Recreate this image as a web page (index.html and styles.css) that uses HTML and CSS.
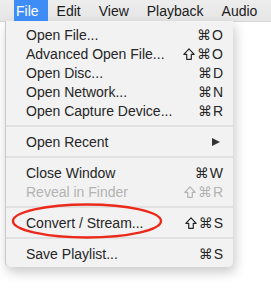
FILE: index.html
```html
<!DOCTYPE html>
<html lang="en">
<head>
  <meta charset="UTF-8">
  <title>File menu</title>
  <link rel="stylesheet" href="styles.css">
</head>
<body>
  <div class="menubar">
    <span class="bar-item active">File</span>
    <span class="bar-item">Edit</span>
    <span class="bar-item">View</span>
    <span class="bar-item">Playback</span>
    <span class="bar-item">Audio</span>
  </div>
  <div class="menu">
    <div class="row"><span>Open File...</span><span class="key">⌘O</span></div>
    <div class="row"><span>Advanced Open File...</span><span class="key"><svg class="shift" viewBox="0 0 12 12"><path d="M6 0.8 L11.2 6.3 H8.3 V11.3 H3.7 V6.3 H0.8 Z"/></svg>⌘O</span></div>
    <div class="row"><span>Open Disc...</span><span class="key">⌘D</span></div>
    <div class="row"><span>Open Network...</span><span class="key">⌘N</span></div>
    <div class="row"><span>Open Capture Device...</span><span class="key">⌘R</span></div>
    <div class="sep"></div>
    <div class="row"><span>Open Recent</span><span class="arrow"></span></div>
    <div class="sep"></div>
    <div class="row"><span>Close Window</span><span class="key">⌘W</span></div>
    <div class="row disabled"><span>Reveal in Finder</span><span class="key"><svg class="shift" viewBox="0 0 12 12"><path d="M6 0.8 L11.2 6.3 H8.3 V11.3 H3.7 V6.3 H0.8 Z"/></svg>⌘R</span></div>
    <div class="sep"></div>
    <div class="row"><span>Convert / Stream...</span><span class="key"><svg class="shift" viewBox="0 0 12 12"><path d="M6 0.8 L11.2 6.3 H8.3 V11.3 H3.7 V6.3 H0.8 Z"/></svg>⌘S</span></div>
    <div class="sep"></div>
    <div class="row"><span>Save Playlist...</span><span class="key">⌘S</span></div>
  </div>
  <!-- red annotation ring -->
  <svg class="ring" width="160" height="44" viewBox="0 0 160 44">
    <ellipse cx="80" cy="22" rx="74" ry="16.5" fill="none" stroke="#ec2a1c" stroke-width="2.4"/>
  </svg>
</body>
</html>
```

FILE: styles.css
```css
* { box-sizing: border-box; margin:0; padding:0; }
body { font-family:"Liberation Sans","DejaVu Sans",sans-serif; font-size:14px; background:#fff; color:#222;
  width:271px; height:294px; overflow:hidden; position:relative; }
.menubar { display:flex; height:22px; align-items:stretch; padding-left:14px;
  background:linear-gradient(#ededed,#e6e6e6); border-bottom:1px solid #d6d6d6; }
.bar-item { display:flex; align-items:center; padding:0 9px; color:#1a1a1a; }
.bar-item.active { background:#3e8cf6; color:#fff; padding:0 9px 0 2px; }
.menu { width:228px; margin-left:5px; margin-top:-1px; padding:4px 0;
  background:#f2f2f2; border-left:1px solid #c9c9c9; border-radius:0 0 5px 5px;
  box-shadow:2px 5px 12px rgba(0,0,0,0.22); }
.row { display:flex; justify-content:space-between; align-items:center; height:19px; padding:0 9px 0 20px; color:#262626; }
.row.disabled { color:#b3b3b3; }
.key { display:flex; align-items:center; letter-spacing:1px; }
.shift { width:12px; height:12px; margin-right:2px; fill:none; stroke:currentColor; stroke-width:1.2; stroke-linejoin:round; }
.arrow { width:0; height:0; border-top:4px solid transparent; border-bottom:4px solid transparent;
  border-left:8px solid #333; margin-right:4px; }
.sep { height:2px; margin:5px 0; background:#e1e1e1; }
.ring { position:absolute; left:7px; top:199px; }
```
